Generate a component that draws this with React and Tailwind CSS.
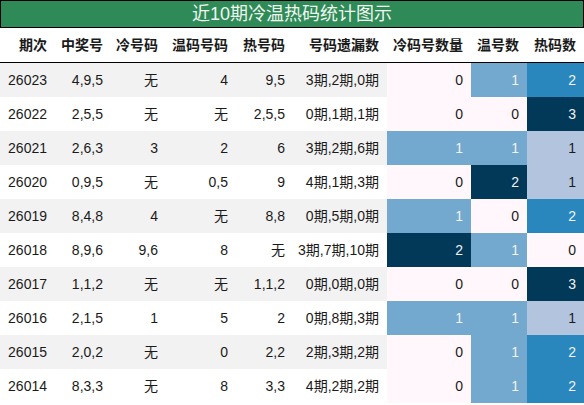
import React from "react";

const rows = [
  ["26023", "4,9,5", "无", "4", "9,5", "3期,2期,0期", 0, 1, 2],
  ["26022", "2,5,5", "无", "无", "2,5,5", "0期,1期,1期", 0, 0, 3],
  ["26021", "2,6,3", "3", "2", "6", "3期,2期,6期", 1, 1, 1],
  ["26020", "0,9,5", "无", "0,5", "9", "4期,1期,3期", 0, 2, 1],
  ["26019", "8,4,8", "4", "无", "8,8", "0期,5期,0期", 1, 0, 2],
  ["26018", "8,9,6", "9,6", "8", "无", "3期,7期,10期", 2, 1, 0],
  ["26017", "1,1,2", "无", "无", "1,1,2", "0期,0期,0期", 0, 0, 3],
  ["26016", "2,1,5", "1", "5", "2", "0期,8期,3期", 1, 1, 1],
  ["26015", "2,0,2", "无", "0", "2,2", "2期,3期,2期", 0, 1, 2],
  ["26014", "8,3,3", "无", "8", "3,3", "4期,2期,2期", 0, 1, 2],
];

const headers = ["期次", "中奖号", "冷号码", "温码号码", "热号码", "号码遗漏数", "冷码号数量", "温号数", "热码数"];

const grid = "grid grid-cols-[55px_56px_55px_70px_57px_94px_84px_56px_57px]";

// scale with max 2
const c2 = {
  0: "bg-[#fff7fb] text-[#1a1a1a]",
  1: "bg-[#74a9cf] text-[#f2f2f2]",
  2: "bg-[#023858] text-[#f2f2f2]",
};
// scale with max 3
const c3 = {
  0: "bg-[#fff7fb] text-[#1a1a1a]",
  1: "bg-[#b3c4de] text-[#1a1a1a]",
  2: "bg-[#2a87bd] text-[#f2f2f2]",
  3: "bg-[#023858] text-[#f2f2f2]",
};

export default function App() {
  return (
    <div
      className="w-[584px] h-[405px] bg-white overflow-hidden"
      style={{ fontFamily: '"Liberation Sans", "Noto Sans CJK SC", sans-serif' }}
    >
      <div className="h-[28px] bg-[#2e8b57] border border-black flex items-center justify-center text-[18px] text-[#f0f5f0] leading-none">
        近10期冷温热码统计图示
      </div>
      <div className={`${grid} h-[35px] border-b border-black text-[14px] font-bold text-[#1a1a1a]`}>
        {headers.map((h) => (
          <div key={h} className="flex items-center justify-end pr-2">
            {h}
          </div>
        ))}
      </div>
      {rows.map((r, i) => (
        <div
          key={r[0]}
          className={`${grid} h-[34px] text-[14px] text-[#1a1a1a] ${i % 2 === 0 ? "bg-[#f2f2f2]" : "bg-white"}`}
        >
          {r.slice(0, 6).map((v, j) => (
            <div key={j} className="flex items-center justify-end pr-2 whitespace-nowrap">
              {v}
            </div>
          ))}
          <div className={`flex items-center justify-end pr-2 ${c2[r[6]]}`}>{r[6]}</div>
          <div className={`flex items-center justify-end pr-2 ${c2[r[7]]}`}>{r[7]}</div>
          <div className={`flex items-center justify-end pr-2 ${c3[r[8]]}`}>{r[8]}</div>
        </div>
      ))}
    </div>
  );
}
